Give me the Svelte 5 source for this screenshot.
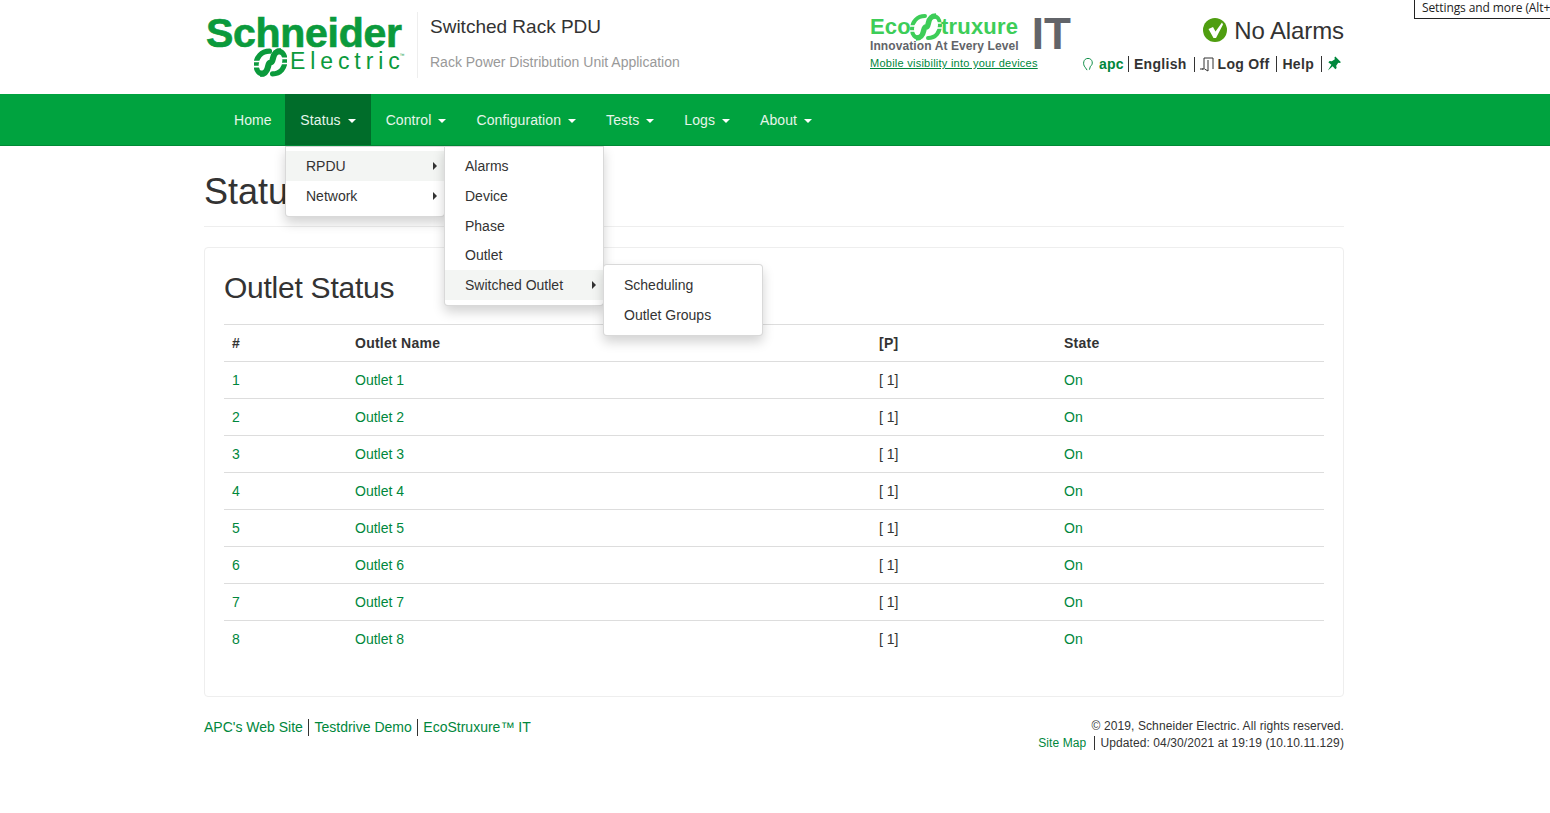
<script>
  const nav = ['Home', 'Status', 'Control', 'Configuration', 'Tests', 'Logs', 'About'];
  const outlets = [1, 2, 3, 4, 5, 6, 7, 8];
</script>

<div class="tooltip">Settings and more (Alt+F)</div>

<header class="wrap head">
  <div class="logo">
    <div class="sch">Schneider</div>
    <div class="ele">
      <svg class="mark" viewBox="0 0 32 28">
        <path d="M15 3 C7 3 2 9 2 16 C2 22 5 25 9 25 M23 3 C27 3 30 6 30 12 C30 19 26 25 18 25" fill="none" stroke="#0b9a3c" stroke-width="5" stroke-linecap="round"/>
        <path d="M26 3 C16 3 20 14 16 14 C12 14 16 25 6 25" fill="none" stroke="#0b9a3c" stroke-width="6"/>
        <path d="M0 13 H9 M0 18 H8 M24 10 H32 M23 15 H32" stroke="#fff" stroke-width="1.600"/>
      </svg>
      <span>Electric</span><sup>™</sup>
    </div>
  </div>
  <div class="titles">
    <div class="t1">Switched Rack PDU</div>
    <div class="t2">Rack Power Distribution Unit Application</div>
  </div>
  <div class="eco">
    <div class="eco-top">
      <div>
        <div class="eco-name">
          <span>Eco</span>
          <svg viewBox="0 0 32 28" width="32" height="28">
            <path d="M15 3 C7 3 2 9 2 16 C2 22 5 25 9 25 M23 3 C27 3 30 6 30 12 C30 19 26 25 18 25" fill="none" stroke="#3dcd58" stroke-width="4" stroke-linecap="round"/>
            <path d="M26 3 C16 3 20 14 16 14 C12 14 16 25 6 25" fill="none" stroke="#3dcd58" stroke-width="5.500"/>
            <path d="M0 13 H9 M0 18 H8 M24 10 H32 M23 15 H32" stroke="#fff" stroke-width="1.500"/>
          </svg>
          <span>truxure</span>
        </div>
        <div class="eco-sub">Innovation At Every Level</div>
      </div>
      <div class="it">IT</div>
    </div>
    <a class="mobile" href="#m">Mobile visibility into your devices</a>
  </div>
  <div class="status">
    <div class="alarm">
      <svg viewBox="0 0 24 24" width="24" height="24">
        <circle cx="12" cy="12" r="12" fill="#4f9e10"/>
        <path d="M5.500 11 L10 9 L12.500 13.500 L19 4.500 L20 6.500 L13 20 L10.500 20 Z" fill="#fff"/>
      </svg>
      <span>No Alarms</span>
    </div>
    <div class="links">
      <svg class="person" viewBox="0 0 12 16" width="12" height="15">
        <path d="M3 11 C0 8 1 1.500 6 1.500 C11 1.500 12 8 8.500 10 L7.500 13.500 M3 11 L5 14" fill="none" stroke="#00873c" stroke-width="1"/>
      </svg>
      <span class="b green first">apc</span>
      <span class="b sep">English</span>
      <svg class="door" viewBox="0 0 14 15" width="14" height="15">
        <path d="M4 1 H13 V12 M4 1 V12 H2 M8 3 V14 L4.500 12 M0 12 H3" fill="none" stroke="#333" stroke-width="1"/>
      </svg>
      <span class="b logoff">Log Off</span>
      <span class="b sep">Help</span>
      <svg class="pin" viewBox="0 0 16 16" width="14" height="15">
        <path d="M9.500 0 L16 6.500 L14.200 7.500 L12.800 7 L10.500 10.500 L11 13 L9.500 14.500 L6.500 11 L1 16 L5 9.500 L1.500 6.500 L3 5 L5.500 5.500 L9 3 L8.500 1 Z" fill="#00873c"/>
      </svg>
    </div>
  </div>
</header>

<nav class="bar">
  <ul class="wrap menu">
    {#each nav as item}
      <li class:active={item === 'Status'}>
        {item}{#if item !== 'Home'}<i class="caret"></i>{/if}
      </li>
    {/each}
  </ul>
</nav>

<main class="wrap">
  <h1>Status</h1>

  <div class="dd dd1">
    <div class="it-row hot">RPDU<i class="arrow"></i></div>
    <div class="it-row">Network<i class="arrow"></i></div>
  </div>
  <div class="dd dd2">
    <div class="it-row">Alarms</div>
    <div class="it-row">Device</div>
    <div class="it-row">Phase</div>
    <div class="it-row">Outlet</div>
    <div class="it-row hot">Switched Outlet<i class="arrow"></i></div>
  </div>
  <div class="dd dd3">
    <div class="it-row">Scheduling</div>
    <div class="it-row">Outlet Groups</div>
  </div>

  <section class="panel">
    <h2>Outlet Status</h2>
    <table>
      <thead>
        <tr><th class="c1">#</th><th class="c2">Outlet Name</th><th class="c3">[P]</th><th>State</th></tr>
      </thead>
      <tbody>
        {#each outlets as n}
          <tr>
            <td class="green">{n}</td>
            <td class="green">Outlet {n}</td>
            <td>[ 1]</td>
            <td class="green">On</td>
          </tr>
        {/each}
      </tbody>
    </table>
  </section>

  <footer>
    <div class="f-left">
      <span class="green">APC's Web Site</span><span class="green fs">Testdrive Demo</span><span class="green fs">EcoStruxure™ IT</span>
    </div>
    <div class="f-right">
      <div>© 2019, Schneider Electric. All rights reserved.</div>
      <div><span class="green map">Site Map</span><span class="upd">Updated: 04/30/2021 at 19:19 (10.10.11.129)</span></div>
    </div>
  </footer>
</main>

<style>
  :global(body) {
    margin: 0;
    background: #fff;
    color: #333;
    font: 14px/20px "Liberation Sans", Arial, sans-serif;
    overflow: hidden;
  }
  .wrap { width: 1140px; margin-left: 204px; box-sizing: border-box; }
  .green { color: #00873c; }
  .b { font-weight: 700; letter-spacing: 0.3px; color: #333; white-space: nowrap; }
  .b.green { color: #00873c; }

  .tooltip {
    position: absolute;
    top: -4px;
    left: 1414px;
    width: 150px;
    height: 23px;
    box-sizing: border-box;
    border: 1px solid #222;
    padding: 3px 0 0 7px;
    font: 12px/16px "Open Sans", sans-serif;
    letter-spacing: -0.1px;
    color: #222;
    white-space: nowrap;
    overflow: hidden;
  }

  .head { height: 94px; display: flex; }
  .logo { flex: none; width: 213px; height: 66px; margin-top: 12px; border-right: 1px solid #eee; color: #0b9a3c; }
  .sch { font-weight: 700; font-size: 41px; line-height: 36px; letter-spacing: -0.3px; margin: 3px 0 0 2px; white-space: nowrap; -webkit-text-stroke: 0.7px #0b9a3c; }
  .ele { display: flex; align-items: flex-start; margin: -3px 0 0 50px; font-size: 23px; letter-spacing: 4.9px; }
  .ele .mark { flex: none; width: 33px; height: 29px; margin: 0 3px 0 0; }
  .ele span { line-height: 26px; }
  .ele sup { font-size: 5px; line-height: 8px; letter-spacing: 0; margin: 3px 0 0 -5px; }
  .titles { flex: none; margin-left: 12px; width: 440px; }
  .t1 { font-size: 19px; line-height: 20px; margin-top: 17px; }
  .t2 { color: #999; line-height: 20px; margin-top: 15px; }
  .eco { flex: none; width: 200px; }
  .eco-top { display: flex; }
  .eco-name { display: flex; align-items: center; height: 28px; margin-top: 13px; color: #3dcd58; font-weight: 700; font-size: 22px; letter-spacing: 0.2px; }
  .eco-name svg { flex: none; margin: 0 -1px; }
  .eco-sub { color: #626469; font-weight: 700; font-size: 12px; line-height: 12px; margin-top: -1px; letter-spacing: 0.1px; white-space: nowrap; }
  .it { color: #626469; font-weight: 700; font-size: 44px; line-height: 38px; margin: 15px 0 0 13px; }
  .mobile { display: block; color: #00873c; font-size: 11px; line-height: 14px; margin-top: 3px; letter-spacing: 0.25px; text-decoration: underline; white-space: nowrap; }
  .status { flex: 1; display: flex; flex-direction: column; align-items: flex-end; }
  .alarm { display: flex; align-items: center; gap: 7px; height: 24px; margin-top: 18px; font-size: 24px; letter-spacing: -0.1px; }
  .alarm span { position: relative; top: 1px; }
  .links { display: flex; align-items: center; margin-top: 12px; height: 20px; }
  .links svg { flex: none; }
  .person { margin-right: 5px; }
  .first { padding-right: 4px; }
  .sep { border-left: 1px solid #333; padding: 0 7px 0 5px; line-height: 16px; height: 16px; }
  .door { box-sizing: content-box; border-left: 1px solid #333; padding-left: 5px; height: 15px; margin-right: 4px; }
  .logoff { padding-right: 7px; }
  .pin { box-sizing: content-box; border-left: 1px solid #333; padding: 0 3px 1px 5px; }

  .bar { height: 52px; background: #00a33f; border-bottom: 1px solid #008a36; box-sizing: border-box; }
  .menu { list-style: none; margin: 0 0 0 204px; padding: 0 0 0 15px; display: flex; height: 51px; color: #e6f5ea; letter-spacing: 0.1px; }
  .menu li { padding: 0 15px; line-height: 52px; }
  .menu li:first-child { padding-right: 13.600px; }
  .menu li.active { background: #006d2a; }
  .caret { display: inline-block; margin-left: 7px; vertical-align: middle; border-top: 4px solid #fff; border-left: 4px solid transparent; border-right: 4px solid transparent; }

  main { position: relative; }
  h1 { margin: 0; height: 81px; box-sizing: border-box; padding-top: 26px; font-size: 36px; line-height: 40px; font-weight: 500; color: #333; border-bottom: 1px solid #eee; }
  .dd {
    position: absolute;
    box-sizing: border-box;
    width: 160px;
    padding: 4px 0 5px;
    background: #fff;
    border: 1px solid rgba(0, 0, 0, 0.15);
    border-radius: 0 0 4px 4px;
    box-shadow: 0 6px 12px rgba(0, 0, 0, 0.175);
    z-index: 2;
  }
  .dd1 { left: 81px; top: 0; height: 71px; }
  .dd2 { left: 240px; top: 0; height: 160px; }
  .dd3 { left: 399px; top: 118px; height: 72px; border-radius: 4px; padding-top: 5px; }
  .it-row { position: relative; height: 29.800px; line-height: 30px; padding-left: 20px; color: #333; }
  .hot { background: #f3f5f3; }
  .arrow { position: absolute; right: 7px; top: 11px; border-left: 4px solid #333; border-top: 4px solid transparent; border-bottom: 4px solid transparent; }

  .panel { margin-top: 20px; height: 450px; box-sizing: border-box; border: 1px solid #eee; border-radius: 4px; padding: 0 19px; }
  h2 { margin: 0; height: 76px; padding-top: 23px; box-sizing: border-box; font-size: 30px; line-height: 33px; font-weight: 500; color: #333; letter-spacing: -0.25px; }
  table { width: 1100px; border-collapse: collapse; table-layout: fixed; }
  th, td { padding: 8px; height: 37px; box-sizing: border-box; line-height: 20px; text-align: left; border-top: 1px solid #ddd; }
  th { border-bottom: 1px solid #ddd; color: #333; font-weight: 700; letter-spacing: 0.25px; }
  tbody tr:first-child td { border-top: 0; }
  .c1 { width: 123px; }
  .c2 { width: 524px; }
  .c3 { width: 185px; }

  footer { display: flex; justify-content: space-between; margin-top: 20px; }
  .f-left { line-height: 20px; }
  .fs { border-left: 1px solid #333; margin-left: 5px; padding-left: 5.600px; display: inline-block; line-height: 17px; }
  .f-right { text-align: right; font-size: 12px; line-height: 17px; letter-spacing: 0.1px; padding-top: 1px; }
  .map { padding-right: 8px; }
  .upd { border-left: 1px solid #333; padding-left: 5px; }
</style>
